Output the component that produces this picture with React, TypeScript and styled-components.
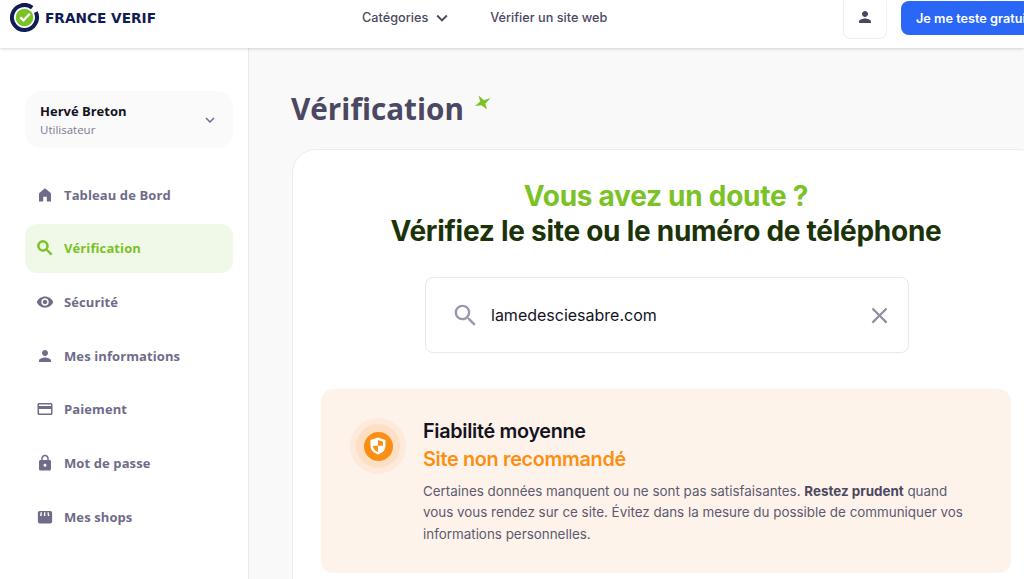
import * as React from "react";
import styled, { createGlobalStyle } from "styled-components";
import {
  MdSearch,
  MdVisibility,
  MdPerson,
  MdCreditCard,
  MdLock,
  MdKeyboardArrowDown,
  MdClose,
} from "react-icons/md";

const GlobalStyle = createGlobalStyle`
  html, body {
    margin: 0;
    padding: 0;
    height: 100%;
    overflow: hidden;
    background: #fff;
    font-family: "Inter", "Liberation Sans", sans-serif;
  }
`;

const HomeIcon = ({ size }: { size: number }) => (
  <svg width={size} height={size} viewBox="0 0 24 24" fill="currentColor">
    <path d="M4 20.5V10.6c0-.6.3-1.1.7-1.5L12 3l7.3 6.1c.4.4.7.9.7 1.5v9.9h-5.6v-6.2H9.6v6.2z" />
  </svg>
);

const ShopIcon = ({ size }: { size: number }) => (
  <svg width={size} height={size} viewBox="0 0 24 24" fill="currentColor">
    <path d="M2.500 6.500C2.500 5 3.500 4 5 4h14c1.500 0 2.500 1 2.500 2.500V18c0 1.500-1 2.500-2.500 2.500H5c-1.500 0-2.500-1-2.500-2.500z" />
    <path d="M6.200 5.800h1.800L7.400 10.800H5.400zM10.800 5.800h1.600V10.800h-2zM15.300 5.800h1.600l.9 5h-2z" fill="#fff" />
  </svg>
);

const navItems = [
  { label: "Tableau de Bord", icon: HomeIcon },
  { label: "Vérification", icon: MdSearch, active: true },
  { label: "Sécurité", icon: MdVisibility },
  { label: "Mes informations", icon: MdPerson },
  { label: "Paiement", icon: MdCreditCard },
  { label: "Mot de passe", icon: MdLock },
  { label: "Mes shops", icon: ShopIcon },
];

const Logo = () => (
  <svg width="29" height="29" viewBox="0 0 29 29">
    <path
      d="M22.200 4.650 A12.500 12.500 0 1 0 25.800 9.200"
      fill="none"
      stroke="#101c54"
      strokeWidth="4"
    />
    <circle cx="14.500" cy="14.500" r="8.800" fill="#7ac225" />
    <path
      d="M10.300 14.300 L13.500 17.400 L19.800 10.800"
      fill="none"
      stroke="#fff"
      strokeWidth="2.300"
    />
  </svg>
);

const Star = () => (
  <svg width="19" height="17" viewBox="0 0 19 17">
    <path
      d="M5.500 1.500 L11 6.300 L17.500 4 L12.300 9.800 L14 15.500 L8.400 11.200 L2 12 L7.200 7.500 Z"
      fill="#7ac225"
    />
  </svg>
);

const Shield = () => (
  <svg width="16" height="18" viewBox="0 0 16 18">
    <path d="M8 0.500 L15.500 3 V8.500 C15.500 13 12.500 16 8 17.500 C3.500 16 0.500 13 0.500 8.500 V3 Z" fill="#fff" />
    <path d="M8 3 L13 4.700 V8.700 H8 Z" fill="#fb8f14" />
    <path d="M8 8.700 V15 C5.200 14 3 12 3 8.700 Z" fill="#fb8f14" />
  </svg>
);

export default function App() {
  return (
    <Page>
      <GlobalStyle />
      <Header>
        <Brand>
          <Logo />
          <BrandName>FRANCE VERIF</BrandName>
        </Brand>
        <TopNav>
          <TopLink>
            Catégories
            <MdKeyboardArrowDown size={22} />
          </TopLink>
          <TopLink>Vérifier un site web</TopLink>
        </TopNav>
        <UserButton>
          <MdPerson size={18} />
        </UserButton>
        <TryButton>Je me teste gratuitement</TryButton>
      </Header>
      <Body>
        <Sidebar>
          <Profile>
            <div>
              <ProfileName>Hervé Breton</ProfileName>
              <ProfileRole>Utilisateur</ProfileRole>
            </div>
            <MdKeyboardArrowDown size={18} color="#6f6c8a" />
          </Profile>
          <Nav>
            {navItems.map((item) => {
              const Icon = item.icon;
              return (
                <NavItem key={item.label} $active={item.active}>
                  <Icon size={item.active ? 20 : 18} />
                  {item.label}
                </NavItem>
              );
            })}
          </Nav>
        </Sidebar>
        <Main>
          <TitleRow>
            <Title>Vérification</Title>
            <Star />
          </TitleRow>
          <Card>
            <Headline>
              <GreenLine>Vous avez un doute ?</GreenLine>
              <DarkLine>Vérifiez le site ou le numéro de téléphone</DarkLine>
            </Headline>
            <SearchBox>
              <MdSearch size={29} color="#9a98ab" />
              <SearchText>lamedesciesabre.com</SearchText>
              <MdClose size={27} color="#8f8da3" />
            </SearchBox>
            <Alert>
              <Halo>
                <HaloMiddle>
                  <HaloCore>
                    <Shield />
                  </HaloCore>
                </HaloMiddle>
              </Halo>
              <AlertContent>
                <AlertTitle>Fiabilité moyenne</AlertTitle>
                <AlertSubtitle>Site non recommandé</AlertSubtitle>
                <AlertText>
                  Certaines données manquent ou ne sont pas satisfaisantes.{" "}
                  <strong>Restez prudent</strong> quand vous vous rendez sur ce site. Évitez dans la
                  mesure du possible de communiquer vos informations personnelles.
                </AlertText>
              </AlertContent>
            </Alert>
          </Card>
        </Main>
      </Body>
    </Page>
  );
}

const Page = styled.div`
  width: 1024px;
  height: 579px;
  overflow: hidden;
  display: flex;
  flex-direction: column;
  background: #f9f9f9;
`;

const Header = styled.header`
  flex: none;
  position: relative;
  z-index: 1;
  height: 48px;
  display: flex;
  align-items: flex-start;
  background: #fff;
  box-shadow: 0 1px 3px rgba(0, 0, 0, 0.16);
  white-space: nowrap;
`;

const Brand = styled.div`
  flex: none;
  width: 362px;
  padding: 3px 0 0 10px;
  box-sizing: border-box;
  display: flex;
  align-items: center;
  gap: 6px;
`;

const BrandName = styled.span`
  font-family: "DejaVu Sans", sans-serif;
  font-size: 13.700px;
  font-weight: 700;
  color: #101c54;
`;

const TopNav = styled.nav`
  flex: none;
  width: 481px;
  height: 35px;
  display: flex;
  align-items: center;
  gap: 37px;
`;

const TopLink = styled.a`
  display: flex;
  align-items: center;
  gap: 3px;
  font-size: 12.700px;
  font-weight: 500;
  color: #4b4862;
`;

const UserButton = styled.button`
  flex: none;
  width: 44px;
  height: 44px;
  margin-top: -5px;
  padding: 0;
  display: flex;
  align-items: center;
  justify-content: center;
  background: #fff;
  border: 1px solid #eeeeee;
  border-radius: 8px;
  color: #4b4862;
`;

const TryButton = styled.button`
  flex: none;
  height: 34px;
  margin: 1px 0 0 14px;
  padding: 0 15px;
  background: #2b67f6;
  border: 0;
  border-radius: 8px;
  color: #fff;
  font-family: inherit;
  font-size: 12.700px;
  font-weight: 600;
`;

const Body = styled.div`
  flex: 1;
  min-height: 0;
  display: flex;
`;

const Sidebar = styled.aside`
  flex: none;
  width: 249px;
  box-sizing: border-box;
  padding: 43px 15px 0 25px;
  background: #fff;
  border-right: 1px solid #e9e9e9;
  font-family: "Open Sans", "Liberation Sans", sans-serif;
`;

const Profile = styled.div`
  height: 57px;
  box-sizing: border-box;
  padding: 0 14px 0 15px;
  display: flex;
  align-items: center;
  justify-content: space-between;
  background: #fafafa;
  border-radius: 16px;
`;

const ProfileName = styled.div`
  font-size: 13px;
  line-height: 18px;
  font-weight: 700;
  color: #14131f;
`;

const ProfileRole = styled.div`
  margin-top: 2px;
  font-size: 11.500px;
  line-height: 15px;
  font-weight: 500;
  color: #7d7a92;
`;

const Nav = styled.nav`
  margin-top: 22px;
  display: flex;
  flex-direction: column;
  gap: 3.950px;
`;

const NavItem = styled.a<{ $active?: boolean }>`
  height: 49.700px;
  box-sizing: border-box;
  padding: 0 ${(p) => (p.$active ? "10px" : "11px")};
  display: flex;
  align-items: center;
  gap: ${(p) => (p.$active ? "9px" : "10px")};
  border-radius: 12px;
  font-size: 13px;
  font-weight: 700;
  letter-spacing: 0.1px;
  color: ${(p) => (p.$active ? "#7ac225" : "#6f6c8a")};
  background: ${(p) => (p.$active ? "#f0f9e8" : "transparent")};
  svg path:not([fill="none"]) {
    stroke: ${(p) => (p.$active ? "currentColor" : "none")};
    stroke-width: 1px;
  }
`;

const Main = styled.main`
  flex: 1;
  min-width: 0;
  padding: 0 0 0 43px;
`;

const TitleRow = styled.div`
  height: 101px;
  margin-left: -1px;
  display: flex;
  align-items: flex-start;
  gap: 9px;
  padding-top: 42px;
  box-sizing: border-box;
  svg {
    margin-top: 4px;
  }
`;

const Title = styled.h1`
  margin: 0;
  font-family: "Open Sans", "Liberation Sans", sans-serif;
  font-size: 29.700px;
  line-height: 38px;
  font-weight: 700;
  color: #4b4862;
`;

const Card = styled.section`
  width: 750px;
  height: 500px;
  box-sizing: border-box;
  padding: 29px 29px 0;
  display: flex;
  flex-direction: column;
  align-items: center;
  background: #fff;
  border: 1px solid #ececec;
  border-radius: 24px;
`;

const Headline = styled.div`
  margin-right: 2px;
  text-align: center;
  font-size: 28px;
  line-height: 35px;
  font-weight: 700;
  letter-spacing: -0.270px;
  white-space: nowrap;
`;

const GreenLine = styled.div`
  color: #7ac225;
`;

const DarkLine = styled.div`
  color: #1c3307;
`;

const SearchBox = styled.div`
  width: 484px;
  height: 76px;
  margin-top: 28px;
  flex: none;
  box-sizing: border-box;
  padding: 0 15px 0 25px;
  display: flex;
  align-items: center;
  background: #fff;
  border: 1px solid #e9e9e9;
  border-radius: 8px;
`;

const SearchText = styled.div`
  flex: 1;
  margin-left: 11px;
  font-size: 16px;
  color: #14131f;
`;

const Alert = styled.div`
  width: 690px;
  height: 184px;
  flex: none;
  margin: 36px 2px 0 0;
  box-sizing: border-box;
  padding: 28px 38px 0 29px;
  display: flex;
  align-items: flex-start;
  gap: 17px;
  background: #fef3ea;
  border-radius: 12px;
`;

const Halo = styled.div`
  flex: none;
  width: 56px;
  height: 56px;
  margin-top: 1px;
  display: flex;
  align-items: center;
  justify-content: center;
  background: #fdeadb;
  border-radius: 50%;
`;

const HaloMiddle = styled.div`
  width: 44px;
  height: 44px;
  display: flex;
  align-items: center;
  justify-content: center;
  background: #fddfc6;
  border-radius: 50%;
`;

const HaloCore = styled.div`
  width: 29px;
  height: 29px;
  display: flex;
  align-items: center;
  justify-content: center;
  background: #fb8f14;
  border-radius: 50%;
`;

const AlertContent = styled.div`
  flex: 1;
  min-width: 0;
`;

const AlertTitle = styled.div`
  font-size: 19.800px;
  line-height: 28px;
  font-weight: 600;
  letter-spacing: -0.300px;
  color: #14131f;
`;

const AlertSubtitle = styled.div`
  font-size: 19.800px;
  line-height: 28px;
  font-weight: 600;
  letter-spacing: -0.300px;
  color: #fb8f14;
`;

const AlertText = styled.p`
  margin: 7.500px 0 0;
  font-size: 13.400px;
  line-height: 21.500px;
  color: #5c5a70;
  strong {
    font-weight: 700;
    color: #4b4862;
  }
`;
